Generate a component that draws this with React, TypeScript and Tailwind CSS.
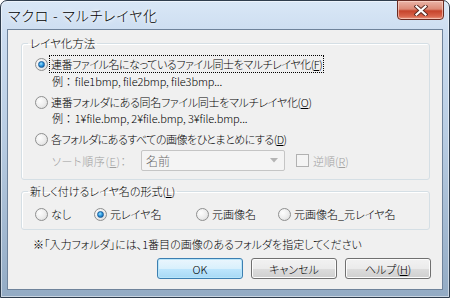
import React from "react";

const Radio = ({ checked = false }: { checked?: boolean }) => (
  <span className="relative inline-flex w-[13px] h-[13px] shrink-0 rounded-full border border-[#8e8f8f] bg-[radial-gradient(circle_at_35%_35%,#fdfdfd_0%,#ececec_55%,#d4d4d4_100%)] items-center justify-center">
    {checked && (
      <span className="w-[7px] h-[7px] rounded-full border border-[#1a5d9c] bg-[radial-gradient(circle_at_40%_35%,#9fe3ff_0%,#2f9be0_45%,#0b4f93_100%)]" />
    )}
  </span>
);

const U = ({ c }: { c: string }) => <span className="underline underline-offset-[1px]">{c}</span>;

const Btn = ({ children, def = false }: { children: React.ReactNode; def?: boolean }) => (
  <div
    className={
      "w-[86px] h-[21px] rounded-[3px] border flex items-center justify-center " +
      (def
        ? "border-[#3c7fb1] shadow-[inset_0_0_0_1px_#b8e5fa] bg-[linear-gradient(#eaf6fd_0%,#d9f0fc_50%,#bee6fd_50%,#a7d9f5_100%)]"
        : "border-[#707070] shadow-[inset_0_0_0_1px_#fcfcfc] bg-[linear-gradient(#f2f2f2_0%,#ebebeb_50%,#dddddd_50%,#cfcfcf_100%)]")
    }
  >
    {children}
  </div>
);

const Rei = () => <span className="[font-feature-settings:normal] mr-[1px]">例：</span>;

export default function App() {
  return (
    <div className="w-[450px] h-[298px] font-['Noto_Sans_CJK_JP',sans-serif] [font-feature-settings:'palt'] text-black font-light">
      <div className="w-full h-full rounded-t-[7px] border border-[#2f3d4d] bg-[linear-gradient(180deg,#d9e7f6_0%,#cbdcf0_12%,#b9cde3_45%,#93abc4_100%)] flex flex-col shadow-[inset_0_0_0_1px_rgba(255,255,255,0.5)]">
        {/* title bar */}
        <div className="h-[28px] flex items-start relative">
          <div className="pl-[7px] pt-[4px] text-[14px] leading-[20px] [text-shadow:0_0_6px_#ffffff,0_0_3px_#ffffff] tracking-[0.8px]">
            マクロ - マルチレイヤ化
          </div>
          <div className="absolute right-[5px] top-[-1px] w-[47px] h-[20px] rounded-b-[4px] border border-[#6a2b22] shadow-[inset_0_0_0_1px_rgba(255,220,210,0.6)] bg-[linear-gradient(180deg,#eab4a7_0%,#dc8a76_45%,#c6432b_55%,#d9654c_85%,#e99a84_100%)] flex items-center justify-center">
            <svg width="14" height="11" viewBox="0 0 14 11">
              <path d="M2.5 1.5 L11.5 9.5 M11.5 1.5 L2.5 9.5" stroke="#5a2a22" strokeWidth="4" strokeLinecap="square" />
              <path d="M2.5 1.5 L11.5 9.5 M11.5 1.5 L2.5 9.5" stroke="#ffffff" strokeWidth="2.2" strokeLinecap="square" />
            </svg>
          </div>
        </div>
        {/* client */}
        <div className="mx-[6px] h-[261px] border border-[#6f839b] bg-[#f0f0f0] flex flex-col text-[11px] leading-[16px]">
          <fieldset className="ml-[13px] mt-[5px] w-[409px] border border-[#d5dfe5] rounded-[3px] shadow-[inset_1px_1px_0_#ffffff]">
            <legend className="ml-[6px] px-[2px] h-[16px] leading-[16px] text-[11.5px]">レイヤ化方法</legend>
            <div className="pl-[13px] pt-[5px] pb-[8px]">
              <div className="h-[16px] flex items-center">
                <Radio checked />
                <span className="ml-[2px] px-[1px] outline outline-1 outline-dotted outline-black h-[16px] leading-[16px] tracking-[-0.45px]">
                  連番ファイル名になっているファイル同士をマルチレイヤ化(<U c="F" />)
                </span>
              </div>
              <div className="h-[16px] mt-[1px] pl-[17px] tracking-[-0.1px]">
                <Rei />file1bmp, file2bmp, file3bmp...
              </div>
              <div className="h-[16px] mt-[5px] flex items-center">
                <Radio />
                <span className="ml-[3px] tracking-[-0.3px]">
                  連番フォルダにある同名ファイル同士をマルチレイヤ化(<U c="O" />)
                </span>
              </div>
              <div className="h-[16px] pl-[17px] tracking-[-0.1px]">
                <Rei />1¥file.bmp, 2¥file.bmp, 3¥file.bmp...
              </div>
              <div className="h-[16px] mt-[5px] flex items-center">
                <Radio />
                <span className="ml-[3px] tracking-[-0.5px]">
                  各フォルダにあるすべての画像をひとまとめにする(<U c="D" />)
                </span>
              </div>
              <div className="h-[21px] mt-[3px] flex items-center">
                <span className="ml-[17px] w-[89px] text-[#a0a0a0] tracking-[0.6px]">
                  ソート順序(<U c="E" />)：
                </span>
                <div className="w-[144px] h-[21px] rounded-[2px] border border-[#c5c5c5] bg-[#f4f4f4] flex items-center justify-between pl-[4px] pr-[6px]">
                  <span className="text-[#6d6d6d] text-[12px]">名前</span>
                  <svg width="8" height="5" viewBox="0 0 8 5">
                    <path d="M0 0 L8 0 L4 4.5 Z" fill="#b4b4b4" />
                  </svg>
                </div>
                <span className="ml-[11px] w-[13px] h-[13px] border border-[#b1b1b1] bg-[#f4f4f4]" />
                <span className="ml-[4px] text-[#a0a0a0]">
                  逆順(<U c="R" />)
                </span>
              </div>
            </div>
          </fieldset>
          <fieldset className="ml-[13px] mt-[3px] w-[409px] border border-[#d5dfe5] rounded-[3px] shadow-[inset_1px_1px_0_#ffffff]">
            <legend className="ml-[6px] px-[2px] h-[16px] leading-[16px]">
              新しく付けるレイヤ名の形式(<U c="L" />)
            </legend>
            <div className="pl-[13px] pt-[7px] pb-[7px] h-[30px] flex items-center">
              <div className="w-[59px] flex items-center">
                <Radio />
                <span className="ml-[3px]">なし</span>
              </div>
              <div className="w-[102px] flex items-center">
                <Radio checked />
                <span className="ml-[3px]">元レイヤ名</span>
              </div>
              <div className="w-[82px] flex items-center">
                <Radio />
                <span className="ml-[3px]">元画像名</span>
              </div>
              <div className="flex items-center">
                <Radio />
                <span className="ml-[3px]">元画像名_元レイヤ名</span>
              </div>
            </div>
          </fieldset>
          <div className="mt-[6px] ml-[25px] h-[16px]">
            ※「入力フォルダ」には、1番目の画像のあるフォルダを指定してください
          </div>
          <div className="mt-[6px] flex justify-end gap-[8px] pr-[11px]">
            <Btn def>OK</Btn>
            <Btn>キャンセル</Btn>
            <Btn>
              ヘルプ(<U c="H" />)
            </Btn>
          </div>
        </div>
      </div>
    </div>
  );
}
